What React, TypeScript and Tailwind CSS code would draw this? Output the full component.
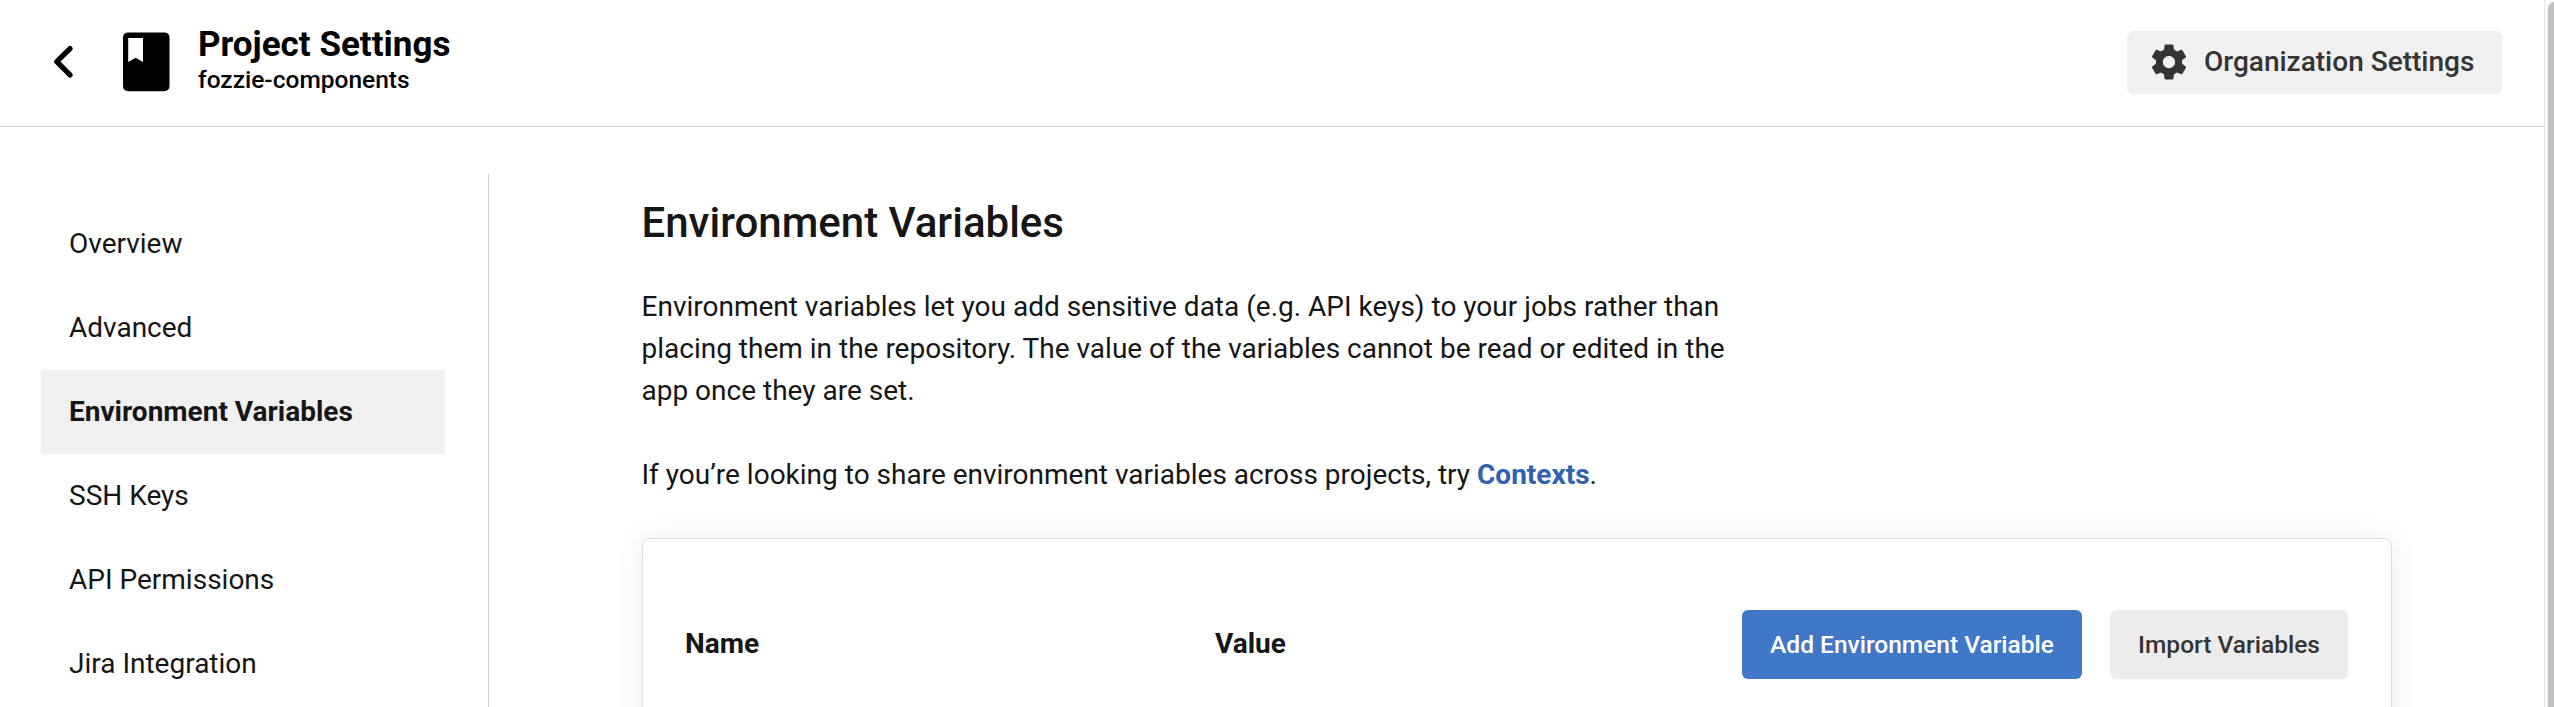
const NAV = ["Overview", "Advanced", "Environment Variables", "SSH Keys", "API Permissions", "Jira Integration"];

function Header() {
  return (
    <header className="flex h-[127px] shrink-0 items-start border-b border-[#d0d0d0] pt-[22px] text-black">
      <svg className="mt-[23px] ml-[53px] h-[34px] w-[21px]" viewBox="0 0 21 34" fill="none" stroke="currentColor" strokeWidth="5.2" strokeLinecap="round" strokeLinejoin="round">
        <path d="M17 3.600L3.800 16.700 17 29.900" />
      </svg>
      <svg className="mt-[10px] ml-[48px] h-[60px] w-[48px]" viewBox="0 0 48 60">
        <path fillRule="evenodd" fill="currentColor" d="M6 .4h36.500a5 5 0 0 1 5 5v48.800a5 5 0 0 1-5 5H6a5 5 0 0 1-5-5V5.400a5 5 0 0 1 5-5zM6.200 6v24l7.500-4.300L21 30V6z" />
      </svg>
      <div className="ml-[28px] flex flex-col">
        <h1 className="text-[35px] leading-[45px] font-bold">Project Settings</h1>
        <span className="text-[24.5px] leading-[26px] font-medium">fozzie-components</span>
      </div>
      <button className="mt-[9px] mr-[42px] ml-auto flex h-[63px] w-[375px] items-center rounded-md bg-[#f0f0f0] pb-[2px] text-[28px] font-medium text-[#343434]">
        <svg className="ml-[21px] h-[42px] w-[42px]" viewBox="0 0 24 24" fill="currentColor">
          <path d="M19.43 12.98c.04-.32.07-.64.07-.98s-.03-.66-.07-.98l2.11-1.65c.19-.15.24-.42.12-.64l-2-3.46c-.12-.22-.39-.3-.61-.22l-2.49 1c-.52-.4-1.08-.73-1.69-.98l-.38-2.65C14.46 2.180 14.250 2 14 2h-4c-.25 0-.46.18-.49.42l-.38 2.650c-.61.25-1.170.59-1.690.98l-2.490-1c-.23-.09-.49 0-.61.22l-2 3.460c-.13.22-.07.49.12.64l2.110 1.650c-.04.32-.07.65-.07.98s.03.66.07.98l-2.110 1.650c-.19.15-.24.42-.12.64l2 3.460c.12.22.39.3.61.22l2.490-1c.52.4 1.080.73 1.690.98l.38 2.650c.03.24.24.42.49.42h4c.25 0 .46-.18.49-.42l.38-2.650c.61-.25 1.170-.59 1.690-.98l2.490 1c.23.09.49 0 .61-.22l2-3.460c.12-.22.07-.49-.12-.64l-2.110-1.650zM12 15.500c-1.930 0-3.500-1.570-3.500-3.500s1.570-3.500 3.500-3.500 3.500 1.570 3.500 3.500-1.570 3.500-3.500 3.500z" />
        </svg>
        <span className="ml-[14px]">Organization Settings</span>
      </button>
    </header>
  );
}

function Sidebar() {
  return (
    <aside className="mt-[47px] w-[489px] shrink-0 border-r border-[#d0d0d0] pt-[28px] pr-[43px] pl-[41px]">
      <nav className="flex flex-col">
        {NAV.map((item) => (
          <a
            key={item}
            className={
              item === "Environment Variables"
                ? "h-[84px] bg-[#f0f0f0] pl-[28px] leading-[84px] font-bold"
                : "h-[84px] pl-[28px] leading-[84px]"
            }
          >
            {item}
          </a>
        ))}
      </nav>
    </aside>
  );
}

function VariablesCard() {
  return (
    <section className="mt-[42px] flex h-[260px] w-[1750px] items-start rounded-lg border border-[#dedede] bg-white pt-[71px] pl-[42px] shadow-[0_0_28px_rgba(0,0,0,0.08)]">
      <div className="w-[530px] leading-[68px] font-bold">Name</div>
      <div className="w-[527px] leading-[68px] font-bold">Value</div>
      <button className="h-[69px] w-[340px] rounded-md bg-[#4177c7] pt-[2px] text-[24.5px] font-medium text-white">Add Environment Variable</button>
      <button className="ml-[28px] h-[69px] w-[238px] rounded-md bg-[#ececec] pt-[2px] text-[24.5px] font-medium text-[#343434]">Import Variables</button>
    </section>
  );
}

export default function App() {
  return (
    <div className="flex h-[707px] w-[2554px] overflow-hidden bg-white font-['Roboto',sans-serif] text-[28px] text-[#161616]">
      <div className="flex w-[2544px] shrink-0 flex-col">
        <Header />
        <div className="flex min-h-0 flex-1">
          <Sidebar />
          <main className="pt-[64px] pl-[153px]">
            <div className="-ml-[0.5px]">
              <h2 className="text-[42px] leading-[63px] font-medium">Environment Variables</h2>
              <p className="mt-[32px] leading-[42px]">
                Environment variables let you add sensitive data (e.g. API keys) to your jobs rather than
                <br />
                placing them in the repository. The value of the variables cannot be read or edited in the
                <br />
                app once they are set.
              </p>
              <p className="mt-[42px] leading-[42px]">
                If you’re looking to share environment variables across projects, try <a className="font-bold text-[#3261b0]">Contexts</a>.
              </p>
            </div>
            <VariablesCard />
          </main>
        </div>
      </div>
      <div className="flex w-[10px] shrink-0 border-l border-[#e6e6e6] bg-[#fafafa] pt-[2px] pl-[3px]">
        <div className="w-[6px] rounded-tl-md bg-[#c1c1c1]" />
      </div>
    </div>
  );
}
